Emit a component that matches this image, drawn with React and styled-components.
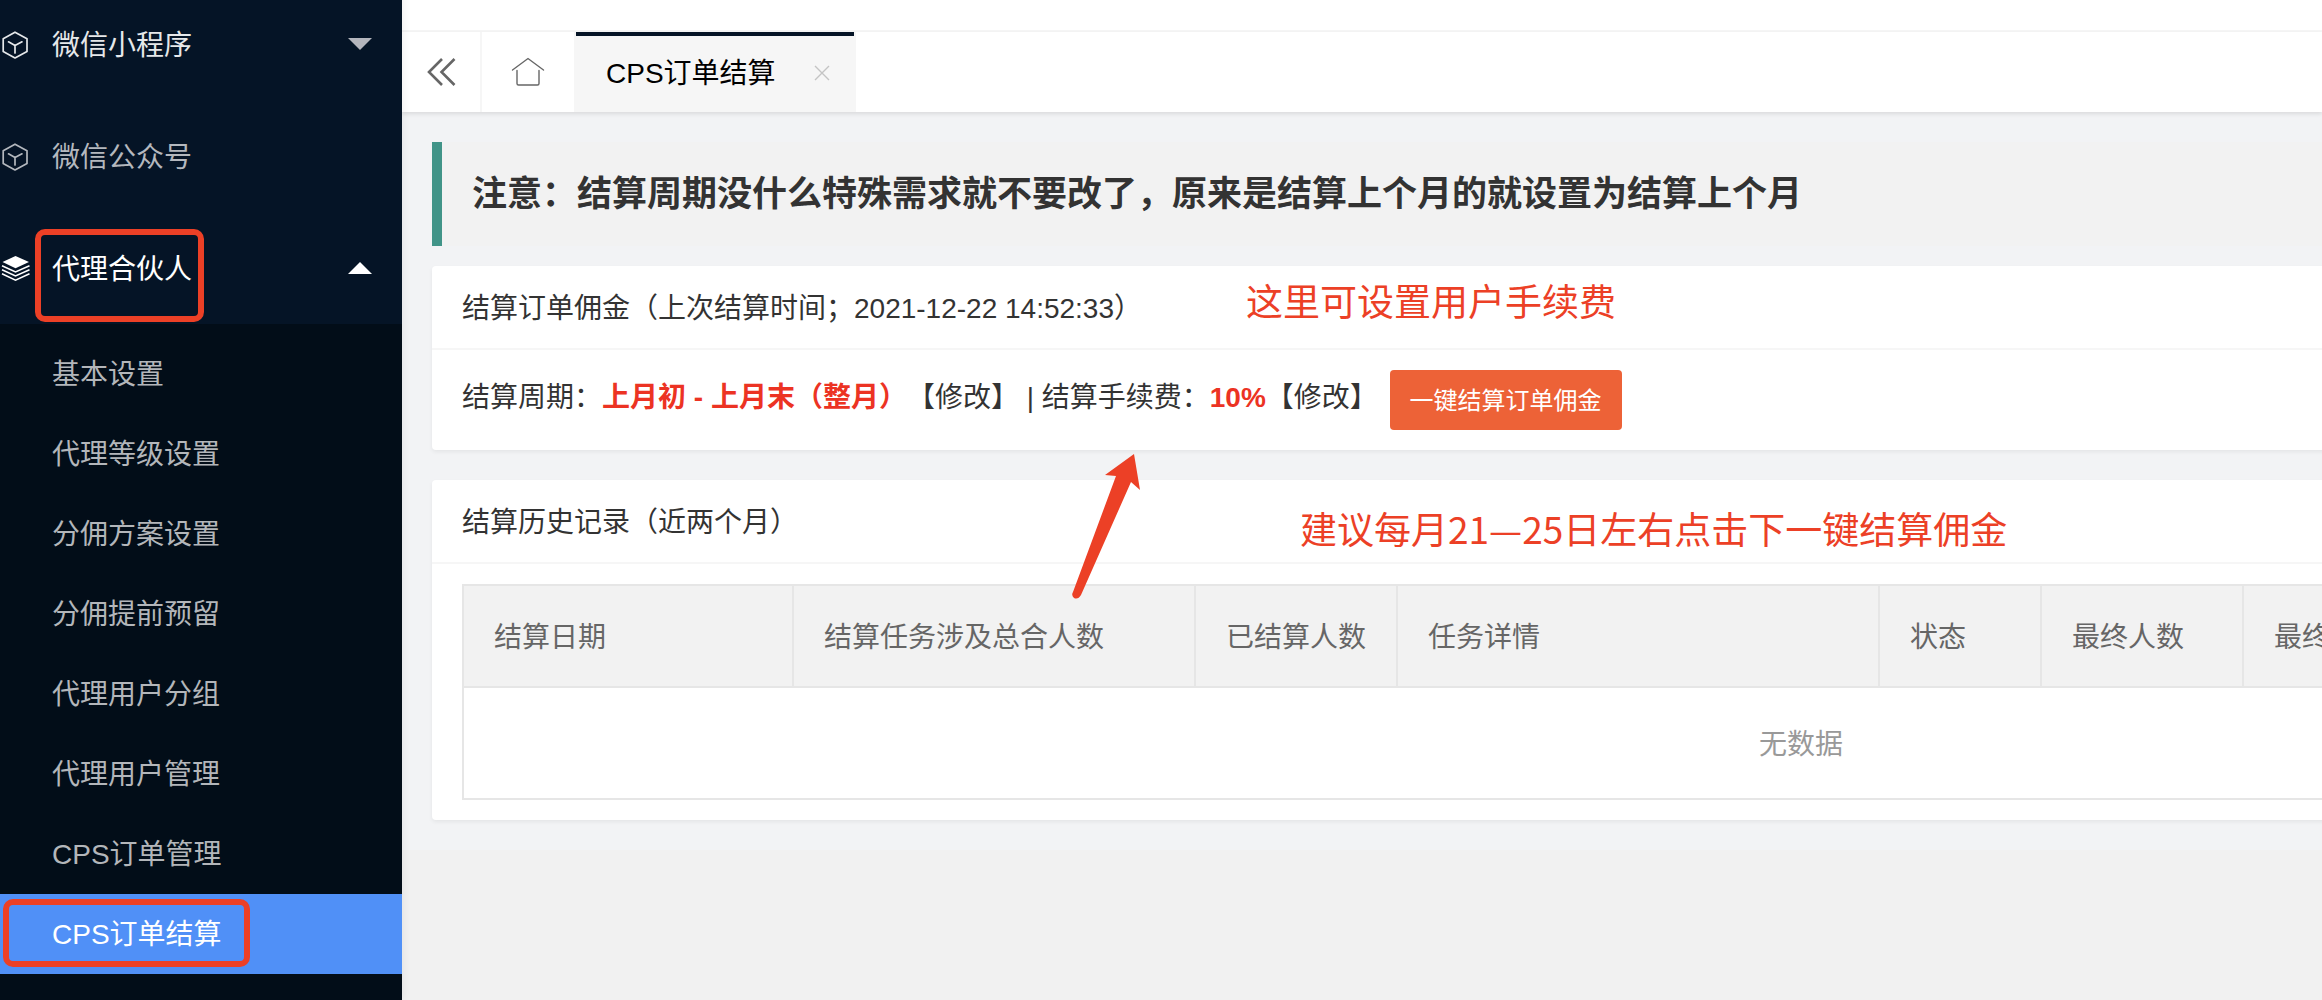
import styled, { createGlobalStyle } from "styled-components"

const menu = [
    { label: "微信小程序", icon: "cube", tone: "#e6e8ea", caret: "down" },
    { label: "微信公众号", icon: "cube", tone: "#b4b8be" },
    { label: "代理合伙人", icon: "layers", tone: "#ffffff", caret: "up", marked: true },
]

const subMenu = [
    "基本设置",
    "代理等级设置",
    "分佣方案设置",
    "分佣提前预留",
    "代理用户分组",
    "代理用户管理",
    "CPS订单管理",
    "CPS订单结算",
]

const columns = [
    { title: "结算日期", width: 330 },
    { title: "结算任务涉及总合人数", width: 402 },
    { title: "已结算人数", width: 202 },
    { title: "任务详情", width: 482 },
    { title: "状态", width: 162 },
    { title: "最终人数", width: 202 },
    { title: "最终", width: 894 },
]

function CubeIcon() {
    return (
        <Icon viewBox="0 0 30 30" fill="none" stroke="currentColor" strokeWidth="1.7" strokeLinejoin="round" strokeLinecap="round">
            <path d="M15 2.200 27 8.800V21.600L15 28 3.200 21.600V8.800Z" />
            <path d="M8.500 11.800 15 15.400 22 11.800M15 15.400V23" />
        </Icon>
    )
}

function LayersIcon() {
    return (
        <Icon viewBox="0 0 30 30" fill="none" stroke="currentColor" strokeWidth="1.5">
            <path d="M15.500 2 29 8 15.500 14.200 2.500 8Z" fill="currentColor" stroke="none" />
            <path d="M2 11.800 15.500 18 29.500 11.800M2 15.800 15.500 22 29.500 15.800M2 19.800 15.500 26.200 29.500 19.800" />
        </Icon>
    )
}

function App() {
    return (
        <Layout>
            <GlobalStyle />
            <Sidebar>
                {menu.map((item) => (
                    <MenuItem href="#" key={item.label} $tone={item.tone}>
                        {item.icon === "cube" ? <CubeIcon /> : <LayersIcon />}
                        <MenuLabel>
                            {item.label}
                            {item.marked && <GroupMark />}
                        </MenuLabel>
                        {item.caret && <Caret $up={item.caret === "up"} />}
                    </MenuItem>
                ))}
                <SubMenu>
                    {subMenu.map((label, i) => (
                        <SubItem href="#" key={label} $active={i === subMenu.length - 1}>
                            {label}
                            {i === subMenu.length - 1 && <ItemMark />}
                        </SubItem>
                    ))}
                </SubMenu>
            </Sidebar>
            <Main>
                <TopBar />
                <Tabs>
                    <TabButton $width={80} aria-label="收起">
                        <svg width="30" height="30" viewBox="0 0 30 30" fill="none" stroke="#666" strokeWidth="2.6">
                            <path d="M16 2 3 15 16 28M28.500 2 15.500 15 28.500 28" />
                        </svg>
                    </TabButton>
                    <TabButton $width={94} aria-label="首页">
                        <svg width="34" height="32" viewBox="0 0 34 32" fill="none" stroke="#666" strokeWidth="1.4" strokeLinecap="round">
                            <path d="M1.500 14 17 2.500 32.500 14" />
                            <path d="M6 14.500V27.500Q6 29 7.500 29H26.500Q28 29 28 27.500V14.500" />
                        </svg>
                    </TabButton>
                    <ActiveTab>
                        CPS订单结算
                        <CloseButton aria-label="关闭">
                            <svg width="16" height="16" viewBox="0 0 16 16" fill="none" stroke="#c4c4c4" strokeWidth="1.4">
                                <path d="M1 1 15 15M15 1 1 15" />
                            </svg>
                        </CloseButton>
                    </ActiveTab>
                </Tabs>
                <Content>
                    <Notice>注意：结算周期没什么特殊需求就不要改了，原来是结算上个月的就设置为结算上个月</Notice>
                    <Card>
                        <CardHeader>
                            结算订单佣金（上次结算时间；2021-12-22 14:52:33）
                            <Note $left={814} $top={6}>这里可设置用户手续费</Note>
                        </CardHeader>
                        <CardBody>
                            结算周期：<Strong>上月初 - 上月末（整月）</Strong>
                            <EditLink href="#">【修改】</EditLink> | 结算手续费：<Strong>10%</Strong>
                            <EditLink href="#">【修改】</EditLink>{" "}
                            <SettleButton>一键结算订单佣金</SettleButton>
                        </CardBody>
                        <Arrow viewBox="0 0 72 148">
                            <path d="M64 1 70 37 61 29 11 142Q8 147 4 145 1 142 3 139L46 23 35 22Z" fill="#ec4026" />
                        </Arrow>
                    </Card>
                    <Card>
                        <CardHeader>
                            结算历史记录（近两个月）
                            <Note $left={868} $top={20}>建议每月21—25日左右点击下一键结算佣金</Note>
                        </CardHeader>
                        <CardBody>
                            <Table>
                                <thead>
                                    <tr>
                                        {columns.map((col) => (
                                            <Th key={col.title} $width={col.width}>{col.title}</Th>
                                        ))}
                                    </tr>
                                </thead>
                                <tbody>
                                    <tr>
                                        <Empty colSpan={columns.length}>无数据</Empty>
                                    </tr>
                                </tbody>
                            </Table>
                        </CardBody>
                    </Card>
                </Content>
            </Main>
        </Layout>
    )
}

export default App


const GlobalStyle = createGlobalStyle`
    * {
        box-sizing: border-box;
    }

    body {
        margin: 0;
        background: #f1f1f1;
        color: #333;
        font-family: "Liberation Sans", "Noto Sans CJK SC", sans-serif;
        font-size: 28px;
        text-spacing-trim: space-all;
    }

    a {
        color: inherit;
        text-decoration: none;
    }

    button {
        border: 0;
        padding: 0;
        background: none;
        font-family: inherit;
        cursor: pointer;
    }
`;

const Layout = styled.div`
    display: flex;
    height: 100vh;
    overflow: hidden;
`;

const Sidebar = styled.nav`
    flex: 0 0 402px;
    margin-top: -12px;
    background: #051426;
    box-shadow: 2px 0 8px rgba(0, 0, 0, 0.06);
    z-index: 1;
`;

const MenuItem = styled.a`
    display: flex;
    align-items: center;
    height: 112px;
    padding-right: 30px;
    color: ${(props) => props.$tone};
`;

const Icon = styled.svg`
    width: 30px;
    height: 30px;
    margin: 2px 22px 0 0;
`;

const MenuLabel = styled.span`
    position: relative;
    flex: 1;
    padding-bottom: 2px;
`;

const Caret = styled.i`
    border: 12px solid transparent;
    border-width: ${(props) => (props.$up ? "0 12px 12px" : "12px 12px 0")};
    border-top-color: ${(props) => (props.$up ? "transparent" : "#b4b6bd")};
    border-bottom-color: #fff;
`;

const Mark = styled.span`
    position: absolute;
    border: 6px solid #ec4026;
    border-radius: 10px;
`;

const GroupMark = styled(Mark)`
    left: -17px;
    top: -18px;
    width: 169px;
    height: 93px;
`;

const ItemMark = styled(Mark)`
    left: 3px;
    top: 5px;
    width: 247px;
    height: 68px;
`;

const SubMenu = styled.div`
    padding: 10px 0;
    min-height: 688px;
    background: #020d18;
`;

const SubItem = styled.a`
    position: relative;
    display: block;
    padding: 2px 0 0 52px;
    line-height: 78px;
    color: ${(props) => (props.$active ? "#fff" : "#b3b6ba")};
    background: ${(props) => (props.$active ? "#5090f7" : "none")};
`;

const Main = styled.main`
    flex: 1;
    min-width: 0;
    overflow: hidden;
`;

const TopBar = styled.header`
    height: 32px;
    background: #fff;
    border-bottom: 2px solid #f6f6f6;
`;

const Tabs = styled.div`
    position: relative;
    display: flex;
    height: 80px;
    background: #fff;
    box-shadow: 0 2px 4px rgba(0, 0, 0, 0.1);
`;

const TabButton = styled.button`
    display: flex;
    align-items: center;
    justify-content: center;
    width: ${(props) => props.$width}px;
    border-right: 2px solid #f6f6f6;
`;

const ActiveTab = styled.div`
    display: flex;
    align-items: center;
    justify-content: space-between;
    width: 280px;
    padding: 0 24px 2px 30px;
    border-right: 2px solid #f6f6f6;
    background: #f6f6f6 linear-gradient(#051426, #051426) no-repeat top / 100% 4px;
    color: #000;
`;

const CloseButton = styled.button`
    display: flex;
    padding-top: 4px;
`;

const Content = styled.div`
    display: grid;
    width: max-content;
    min-width: 100%;
    padding: 30px;
    background: #f2f3f5;
`;

const Notice = styled.h3`
    margin: 0 0 20px;
    padding: 30px;
    border-left: 10px solid #419488;
    background: #f2f2f2;
    font-size: 35px;
    line-height: 44px;
`;

const Card = styled.section`
    position: relative;
    margin-bottom: 30px;
    border-radius: 4px;
    background: #fff;
    box-shadow: 0 2px 4px rgba(0, 0, 0, 0.06);

    &:last-child {
        margin-bottom: 0;
    }
`;

const CardHeader = styled.div`
    position: relative;
    padding: 4px 30px 0;
    border-bottom: 2px solid #f6f6f6;
    line-height: 78px;
`;

const CardBody = styled.div`
    padding: 20px 30px;
    line-height: 56px;
`;

const Note = styled.span`
    position: absolute;
    left: ${(props) => props.$left}px;
    top: ${(props) => props.$top}px;
    color: #ec4026;
    font-family: "Noto Sans CJK SC", sans-serif;
    font-size: 37px;
    line-height: 56px;
    white-space: nowrap;
`;

const Arrow = styled.svg`
    position: absolute;
    left: 638px;
    top: 187px;
    width: 72px;
    height: 148px;
    z-index: 1;
`;

const Strong = styled.b`
    color: #ec3323;
`;

const EditLink = styled.a`
    color: #333;
`;

const SettleButton = styled.button`
    height: 60px;
    margin-left: 4px;
    padding: 0 20px 4px;
    border-radius: 4px;
    background: #ed6237;
    color: #fff;
    font-size: 24px;
    vertical-align: middle;
`;

const Table = styled.table`
    table-layout: fixed;
    width: 2678px;
    border: 2px solid #e6e6e6;
    border-spacing: 0;
`;

const Th = styled.th`
    width: ${(props) => props.$width}px;
    height: 102px;
    padding: 4px 28px 0 30px;
    border-right: 2px solid #e6e6e6;
    border-bottom: 2px solid #e6e6e6;
    background: #f2f2f2;
    color: #666;
    font-weight: 400;
    text-align: left;
    white-space: nowrap;
`;

const Empty = styled.td`
    height: 110px;
    padding: 4px 0 0;
    color: #999;
    text-align: center;
`;
